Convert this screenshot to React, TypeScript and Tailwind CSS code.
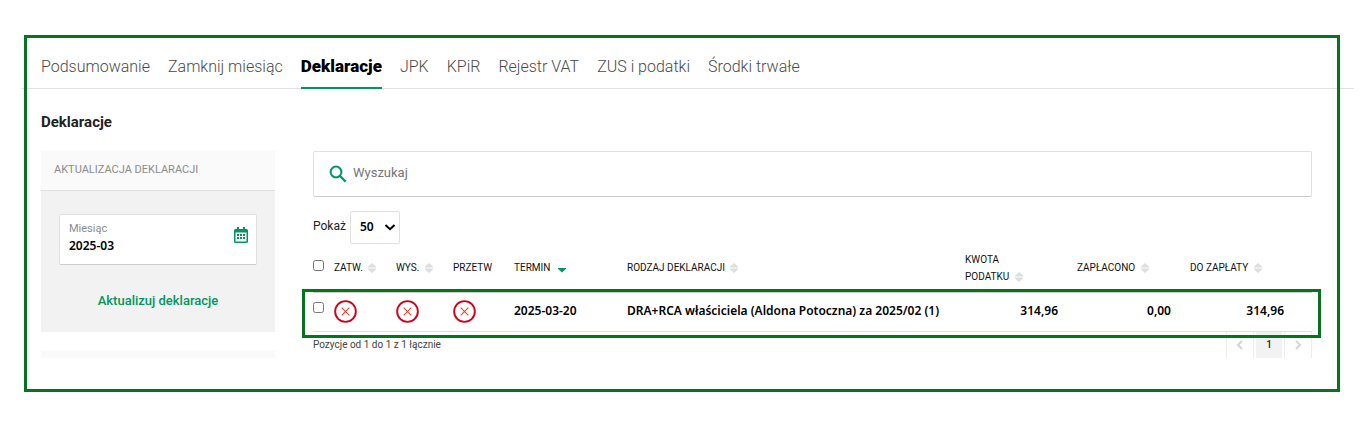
import React from "react";

const tabs = [
  "Podsumowanie",
  "Zamknij miesiąc",
  "Deklaracje",
  "JPK",
  "KPiR",
  "Rejestr VAT",
  "ZUS i podatki",
  "Środki trwałe",
];

function SortIcon() {
  return (
    <svg viewBox="0 0 8 10" className="ml-[3px] inline-block h-[10px] w-2 align-[-2px]" fill="#dedede" aria-hidden="true">
      <path d="M4 0 8 3.500V4.500H0V3.500zM0 5.500h8v1L4 10 0 6.500z" />
    </svg>
  );
}

function SortedIcon() {
  return (
    <svg viewBox="0 0 8 10" className="ml-[5px] inline-block h-[10px] w-2 align-[-3px]" fill="#00965e" aria-hidden="true">
      <path d="M0 4h8v.8L4 8.600 0 4.800z" />
    </svg>
  );
}

function RejectedIcon() {
  return (
    <svg viewBox="0 0 24 24" className="block size-[23px]" fill="none" role="img" aria-label="Nie">
      <circle cx="12" cy="12" r="10.800" stroke="#d0021b" strokeWidth="2" />
      <path d="m8 8 8 8M16 8l-8 8" stroke="#e8412f" strokeWidth="1.100" />
    </svg>
  );
}

function SearchIcon() {
  return (
    <svg viewBox="0 0 18 18" className="size-[18px] shrink-0" fill="none" stroke="#00965e" aria-hidden="true">
      <circle cx="7" cy="7" r="5.400" strokeWidth="2" />
      <path d="m11 11 5.600 5.600" strokeWidth="2.200" />
    </svg>
  );
}

function CalendarIcon() {
  return (
    <svg viewBox="0 0 14 16" className="h-4 w-[14px]" aria-hidden="true">
      <path d="M3 0h2v2h4V0h2v2h1.500A1.500 1.500 0 0 1 14 3.500V14.500A1.500 1.500 0 0 1 12.500 16h-11A1.500 1.500 0 0 1 0 14.500V3.500A1.500 1.500 0 0 1 1.500 2H3z" fill="#00965e" />
      <path d="M1.500 5.500h11v9h-11z" fill="#fff" />
      <path d="M3 7h2v2H3zM6 7h2v2H6zM9 7h2v2H9zM3 10h2v2H3zM6 10h2v2H6zM9 10h2v2H9z" fill="#00965e" />
    </svg>
  );
}

function Chevron({ d, className }: { d: string; className: string }) {
  return (
    <svg viewBox="0 0 10 10" className={className} fill="none" stroke="currentColor" aria-hidden="true">
      <path d={d} strokeWidth="2" />
    </svg>
  );
}

const th = "pl-[10px] text-left align-middle font-normal";
const iconCell = "pl-[10px] align-middle";
const textCell = "pb-[2px] pl-[10px] align-middle";
const amount = "pr-[9px] pb-[2px] text-right align-middle";

export default function App() {
  return (
    <div className="bg-white pt-[35px] pr-[29px] pb-[30px] pl-6 font-['Roboto','Noto_Sans',sans-serif] text-[12px] leading-[17px] text-black">
      <div className="relative pt-[3px] pb-[34px]">
        <div className="pointer-events-none absolute inset-0 z-10 border-3 border-[#05731f]" />

        <nav className="-mr-[14px] -ml-[3px] flex gap-[18px] border-b border-[#e2e2e2] pl-5 text-[16px] leading-6 font-light text-[#4a4a4a]">
          {tabs.map((tab) =>
            tab === "Deklaracje" ? (
              <a key={tab} href="#" aria-current="page" className="-mb-px border-b-2 border-[#00965e] pt-4 pb-[9px] text-[17px] font-black text-black">
                {tab}
              </a>
            ) : (
              <a key={tab} href="#" className="pt-[17px] pb-[9px]">
                {tab}
              </a>
            ),
          )}
        </nav>

        <main className="pr-7 pl-[17px]">
          <h1 className="pt-[23px] pb-[19px] text-[15px] leading-5 font-bold text-[#222]">Deklaracje</h1>

          <div className="flex items-start gap-[38px]">
            <aside className="w-[234px] shrink-0">
              <section className="bg-[#f2f2f2]">
                <h2 className="border-b border-[#e0e0e0] bg-[#fafafa] px-[13px] pt-[10px] pb-3 text-[11px] text-[#8c8c8c]">
                  AKTUALIZACJA DEKLARACJI
                </h2>
                <div className="px-[18px] pt-[23px] pb-[23px]">
                  <div className="flex h-[51px] items-center justify-between rounded-xs border border-b-[#ccc] border-[#e0e0e0] bg-white pr-2 pb-[5px] pl-[9px]">
                    <div className="flex flex-col">
                      <label htmlFor="month" className="text-[11px] text-[#8c8c8c]">
                        Miesiąc
                      </label>
                      <input id="month" type="text" defaultValue="2025-03" className="h-[17px] w-32 font-['Noto_Sans',sans-serif] font-semibold outline-none" />
                    </div>
                    <button type="button" aria-label="Wybierz miesiąc" className="-mt-1">
                      <CalendarIcon />
                    </button>
                  </div>
                  <button type="button" className="mt-[27px] block w-full text-[13px] font-medium text-[#00965e]">
                    Aktualizuj deklaracje
                  </button>
                </div>
              </section>
              <div className="mt-[19px] h-[7px] bg-[#fafafa]" />
            </aside>

            <div className="min-w-0 flex-1">
              <label className="flex h-[46px] items-center gap-[6px] rounded-xs border border-b-[#ccc] border-[#e0e0e0] px-[15px]">
                <SearchIcon />
                <input type="search" aria-label="Wyszukaj" placeholder="Wyszukaj" className="min-w-0 flex-1 pb-[3px] text-[13px] outline-none placeholder:text-[#757575]" />
              </label>

              <div className="mt-[14px] flex gap-1">
                <label htmlFor="page-size" className="pt-[7px] text-[#222]">
                  Pokaż
                </label>
                <div className="relative">
                  <select id="page-size" defaultValue="50" className="block h-[33px] w-[50px] appearance-none rounded-xs border border-[#e0e0e0] bg-white pb-[3px] pl-[9px] font-['Noto_Sans',sans-serif] font-semibold">
                    <option>50</option>
                    <option>100</option>
                  </select>
                  <Chevron d="M.5 3 5 7.200 9.500 3" className="pointer-events-none absolute top-[11px] right-[5px] size-[10px]" />
                </div>
              </div>

              <div className="relative">
                <table className="w-full table-fixed border-collapse">
                  <colgroup>
                    <col className="w-[11px]" />
                    <col className="w-[62px]" />
                    <col className="w-[57px]" />
                    <col className="w-[61px]" />
                    <col className="w-[113px]" />
                    <col />
                    <col className="w-[112px]" />
                    <col className="w-[113px]" />
                    <col className="w-[113px]" />
                    <col className="w-[19px]" />
                  </colgroup>
                  <thead>
                    <tr className="h-12 border-b-2 border-[#ccc] text-[10px] text-[#111]">
                      <th className="align-middle">
                        <input type="checkbox" aria-label="Zaznacz wszystkie" className="mb-[5px] block size-[11px]" />
                      </th>
                      <th className={th}>ZATW. <SortIcon /></th>
                      <th className={th}>WYS. <SortIcon /></th>
                      <th className={th}>PRZETW</th>
                      <th className={th}>TERMIN <SortedIcon /></th>
                      <th className={th}>RODZAJ DEKLARACJI <SortIcon /></th>
                      <th className={th}>KWOTA<br />PODATKU <SortIcon /></th>
                      <th className={th}>ZAPŁACONO <SortIcon /></th>
                      <th className={th}>DO ZAPŁATY <SortIcon /></th>
                      <td />
                    </tr>
                  </thead>
                  <tbody>
                    <tr className="h-[39px] border-b border-[#e0e0e0] font-['Noto_Sans',sans-serif] font-semibold">
                      <td className="align-middle">
                        <input type="checkbox" aria-label="Zaznacz deklarację" className="mb-2 block size-[11px]" />
                      </td>
                      <td className={iconCell}><RejectedIcon /></td>
                      <td className={iconCell}><RejectedIcon /></td>
                      <td className={iconCell}><RejectedIcon /></td>
                      <td className={textCell}>2025-03-20</td>
                      <td className={textCell}>DRA+RCA właściciela (Aldona Potoczna) za 2025/02 (1)</td>
                      <td className={amount}>314,96</td>
                      <td className={amount}>0,00</td>
                      <td className={amount}>314,96</td>
                      <td />
                    </tr>
                  </tbody>
                </table>
                <div className="pointer-events-none absolute -right-[9px] -bottom-[6px] -left-[11px] z-10 h-[49px] border-3 border-[#05731f]" />
              </div>

              <div className="flex h-[26px] justify-between overflow-hidden">
                <p className="pt-1 text-[10px] text-[#444]">Pozycje od 1 do 1 z 1 łącznie</p>
                <div className="flex gap-[2px] text-[10px] font-medium">
                  <button type="button" aria-label="Poprzednia strona" className="flex w-7 justify-center border-x border-[#ececec] pt-2 text-[#d5d5d5]">
                    <Chevron d="M7 1 3 5l4 4" className="size-[10px]" />
                  </button>
                  <button type="button" aria-current="page" className="w-[26px] bg-[#f2f2f2] text-[#222]">
                    1
                  </button>
                  <button type="button" aria-label="Następna strona" className="flex w-7 justify-center border-x border-[#ececec] pt-2 text-[#d5d5d5]">
                    <Chevron d="m3 1 4 4-4 4" className="size-[10px]" />
                  </button>
                </div>
              </div>
            </div>
          </div>
        </main>
      </div>
    </div>
  );
}
